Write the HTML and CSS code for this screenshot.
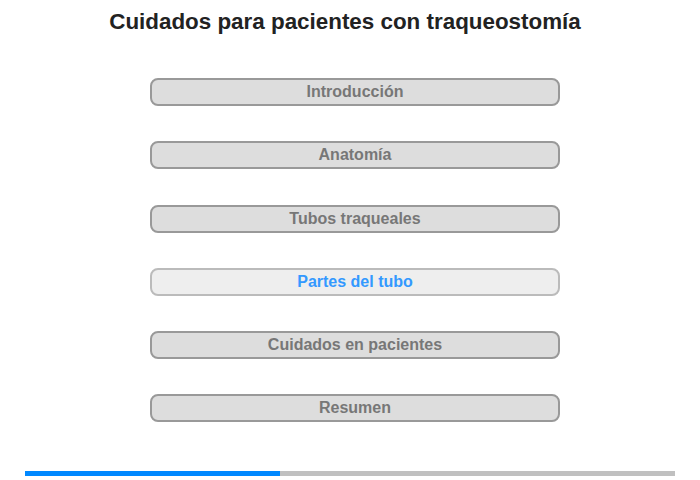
FILE: index.html
```html
<!DOCTYPE html>
<html lang="es">
<head>
  <meta charset="UTF-8">
  <title>Cuidados para pacientes con traqueostomía</title>
  <link rel="stylesheet" href="styles.css">
</head>
<body>
  <h1 class="titulo">Cuidados para pacientes con traqueostomía</h1>

  <div class="menu">
    <button class="btn">Introducción</button>
    <button class="btn">Anatomía</button>
    <button class="btn">Tubos traqueales</button>
    <button class="btn activo">Partes del tubo</button>
    <button class="btn">Cuidados en pacientes</button>
    <button class="btn">Resumen</button>
  </div>

  <div class="progreso">
    <div class="progreso-barra" style="width:39.2%"></div>
  </div>
</body>
</html>
```

FILE: styles.css
```css
body {
  font-family: "Liberation Sans", Arial, sans-serif;
  margin: 0;
  padding: 0 25px;
  height: 480px;
  box-sizing: border-box;
}
.titulo {
  font-size: 22.4px;
  font-weight: bold;
  color: #222;
  text-align: center;
  margin: 0;
  padding-top: 9px;
  height: 78px;
  box-sizing: border-box;
  padding-right: 10px;
}
.menu {
  display: flex;
  flex-direction: column;
  gap: 35.3px;
  width: 410px;
  margin-left: 125px;
}
.btn {
  height: 28px;
  background-color: #dddddd;
  border: 2px solid #999;
  border-radius: 8px;
  color: #777;
  font-family: "Liberation Sans", Arial, sans-serif;
  font-size: 16px;
  font-weight: bold;
  cursor: pointer;
  padding: 0;
}
.btn.activo {
  background-color: #eeeeee;
  border-color: #bbb;
  color: #3399ff;
}
.progreso {
  margin-top: 49px;
  height: 5px;
  background-color: #c0c0c0;
}
.progreso-barra {
  height: 100%;
  background-color: #0088ff;
}
```
